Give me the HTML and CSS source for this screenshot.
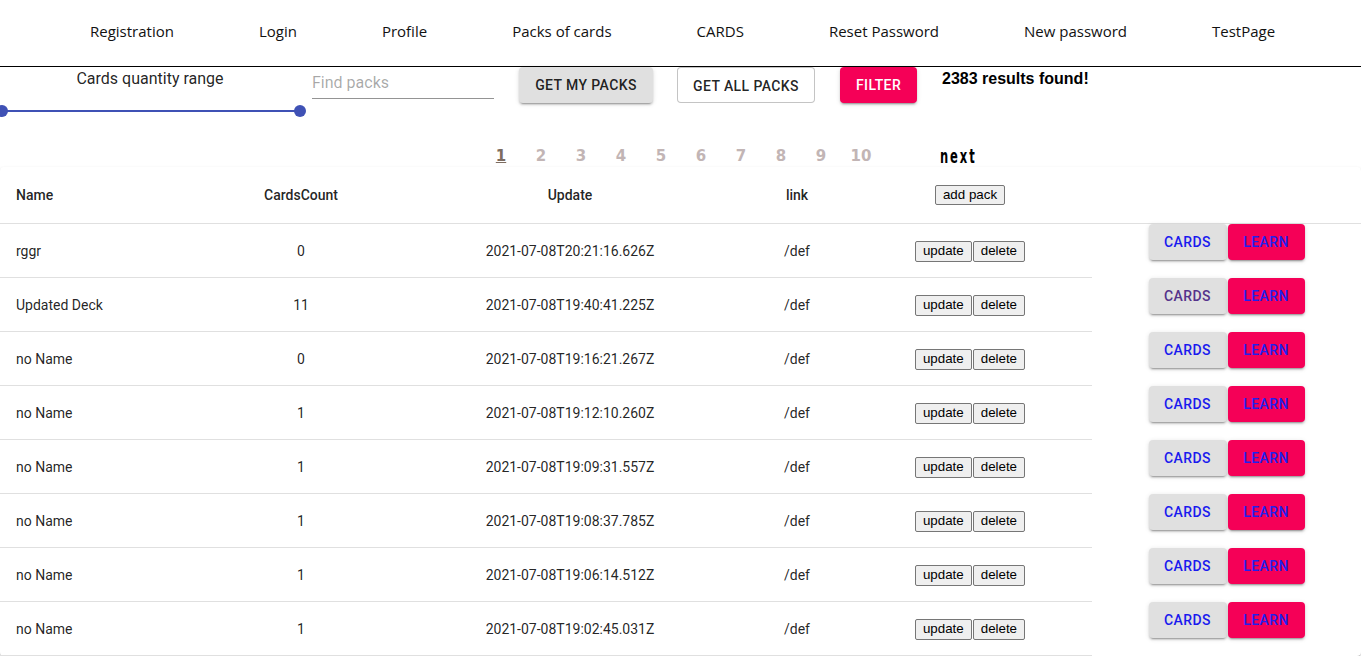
FILE: index.html
```html
<!DOCTYPE html>
<html lang="en">
<head>
<meta charset="utf-8">
<title>Packs of cards</title>
<link rel="stylesheet" href="styles.css">
</head>
<body>
<header class="header">
  <nav class="nav">
    <a class="nav-link">Registration</a>
    <a class="nav-link">Login</a>
    <a class="nav-link">Profile</a>
    <a class="nav-link">Packs of cards</a>
    <a class="nav-link">CARDS</a>
    <a class="nav-link">Reset Password</a>
    <a class="nav-link">New password</a>
    <a class="nav-link">TestPage</a>
  </nav>
</header>

<section class="controls">
  <div class="range">
    <div class="range-label">Cards quantity range</div>
    <div class="slider">
      <span class="slider-track"></span>
      <span class="slider-thumb thumb-left"></span>
      <span class="slider-thumb thumb-right"></span>
    </div>
  </div>
  <input class="search" type="text" placeholder="Find packs">
  <button class="mbtn mbtn-gray w-my">Get my packs</button>
  <button class="mbtn mbtn-outline w-all">Get all packs</button>
  <button class="mbtn mbtn-pink w-filter">Filter</button>
  <div class="results">2383 results found!</div>
</section>

<div class="pagination">
  <span class="page current">1</span>
  <span class="page">2</span>
  <span class="page">3</span>
  <span class="page">4</span>
  <span class="page">5</span>
  <span class="page">6</span>
  <span class="page">7</span>
  <span class="page">8</span>
  <span class="page">9</span>
  <span class="page">10</span>
  <span class="next">next</span>
</div>

<div class="paper">
  <div class="row head">
    <div class="cell left">Name</div>
    <div class="cell">CardsCount</div>
    <div class="cell">Update</div>
    <div class="cell">link</div>
    <div class="cell c5"><button class="nbtn">add pack</button></div>
    <div class="cell"></div>
  </div>

  <div class="row body">
    <div class="cell left">rggr</div>
    <div class="cell">0</div>
    <div class="cell">2021-07-08T20:21:16.626Z</div>
    <div class="cell">/def</div>
    <div class="cell c5"><div class="pair"><button class="nbtn">update</button><button class="nbtn">delete</button></div></div>
    <div class="cell c6"><button class="mbtn mbtn-gray w-cards link">Cards</button><button class="mbtn mbtn-pink w-learn link">Learn</button></div>
  </div>

  <div class="row body">
    <div class="cell left">Updated Deck</div>
    <div class="cell">11</div>
    <div class="cell">2021-07-08T19:40:41.225Z</div>
    <div class="cell">/def</div>
    <div class="cell c5"><div class="pair"><button class="nbtn">update</button><button class="nbtn">delete</button></div></div>
    <div class="cell c6"><button class="mbtn mbtn-gray w-cards link visited">Cards</button><button class="mbtn mbtn-pink w-learn link">Learn</button></div>
  </div>

  <div class="row body">
    <div class="cell left">no Name</div>
    <div class="cell">0</div>
    <div class="cell">2021-07-08T19:16:21.267Z</div>
    <div class="cell">/def</div>
    <div class="cell c5"><div class="pair"><button class="nbtn">update</button><button class="nbtn">delete</button></div></div>
    <div class="cell c6"><button class="mbtn mbtn-gray w-cards link">Cards</button><button class="mbtn mbtn-pink w-learn link">Learn</button></div>
  </div>

  <div class="row body">
    <div class="cell left">no Name</div>
    <div class="cell">1</div>
    <div class="cell">2021-07-08T19:12:10.260Z</div>
    <div class="cell">/def</div>
    <div class="cell c5"><div class="pair"><button class="nbtn">update</button><button class="nbtn">delete</button></div></div>
    <div class="cell c6"><button class="mbtn mbtn-gray w-cards link">Cards</button><button class="mbtn mbtn-pink w-learn link">Learn</button></div>
  </div>

  <div class="row body">
    <div class="cell left">no Name</div>
    <div class="cell">1</div>
    <div class="cell">2021-07-08T19:09:31.557Z</div>
    <div class="cell">/def</div>
    <div class="cell c5"><div class="pair"><button class="nbtn">update</button><button class="nbtn">delete</button></div></div>
    <div class="cell c6"><button class="mbtn mbtn-gray w-cards link">Cards</button><button class="mbtn mbtn-pink w-learn link">Learn</button></div>
  </div>

  <div class="row body">
    <div class="cell left">no Name</div>
    <div class="cell">1</div>
    <div class="cell">2021-07-08T19:08:37.785Z</div>
    <div class="cell">/def</div>
    <div class="cell c5"><div class="pair"><button class="nbtn">update</button><button class="nbtn">delete</button></div></div>
    <div class="cell c6"><button class="mbtn mbtn-gray w-cards link">Cards</button><button class="mbtn mbtn-pink w-learn link">Learn</button></div>
  </div>

  <div class="row body">
    <div class="cell left">no Name</div>
    <div class="cell">1</div>
    <div class="cell">2021-07-08T19:06:14.512Z</div>
    <div class="cell">/def</div>
    <div class="cell c5"><div class="pair"><button class="nbtn">update</button><button class="nbtn">delete</button></div></div>
    <div class="cell c6"><button class="mbtn mbtn-gray w-cards link">Cards</button><button class="mbtn mbtn-pink w-learn link">Learn</button></div>
  </div>

  <div class="row body">
    <div class="cell left">no Name</div>
    <div class="cell">1</div>
    <div class="cell">2021-07-08T19:02:45.031Z</div>
    <div class="cell">/def</div>
    <div class="cell c5"><div class="pair"><button class="nbtn">update</button><button class="nbtn">delete</button></div></div>
    <div class="cell c6"><button class="mbtn mbtn-gray w-cards link">Cards</button><button class="mbtn mbtn-pink w-learn link">Learn</button></div>
  </div>
</div>
</body>
</html>
```

FILE: styles.css
```css
* { box-sizing: border-box; }

html, body {
  margin: 0;
  padding: 0;
  background: #fff;
  font-family: Roboto, "Liberation Sans", sans-serif;
  color: rgba(0, 0, 0, 0.87);
}

/* ---------- header ---------- */
.header {
  height: 67px;
  border-bottom: 1px solid #000;
}

.nav {
  display: flex;
  align-items: center;
  height: 61px;
  padding-left: 90px;
  gap: 85px;
}

.nav-link {
  font-family: "Open Sans", "Noto Sans", sans-serif;
  font-size: 15px;
  color: #111;
  text-decoration: none;
}

/* ---------- controls ---------- */
.controls {
  display: flex;
  align-items: flex-start;
  height: 53px;
}

.range {
  width: 300px;
}

.range-label {
  margin-top: 2px;
  font-size: 16px;
  line-height: 19px;
  text-align: center;
  color: rgba(0, 0, 0, 0.87);
}

.slider {
  position: relative;
  margin: 17px 0 0 2px;
  width: 298px;
  height: 12px;
}

.slider-track {
  position: absolute;
  left: 0;
  right: 0;
  top: 5px;
  height: 2px;
  background: #3f51b5;
}

.slider-thumb {
  position: absolute;
  top: 0;
  width: 12px;
  height: 12px;
  border-radius: 50%;
  background: #3f51b5;
}

.thumb-left { left: -6px; }
.thumb-right { right: -6px; }

.search {
  margin-left: 12px;
  width: 182px;
  height: 32px;
  padding: 6px 0 7px;
  border: 0;
  border-bottom: 1px solid rgba(0, 0, 0, 0.42);
  font-family: Roboto, sans-serif;
  font-size: 16px;
  line-height: 19px;
  outline: none;
  background: transparent;
}

.search::placeholder {
  color: rgba(0, 0, 0, 0.35);
}

/* material buttons */
.mbtn {
  height: 36px;
  padding: 6px 8px;
  border: 0;
  border-radius: 4px;
  font-family: Roboto, sans-serif;
  font-weight: 500;
  font-size: 14px;
  line-height: 24px;
  letter-spacing: 0.4px;
  text-transform: uppercase;
  color: rgba(0, 0, 0, 0.87);
  cursor: pointer;
}

.mbtn-gray {
  background: #e0e0e0;
  box-shadow: 0 3px 1px -2px rgba(0,0,0,0.2), 0 2px 2px 0 rgba(0,0,0,0.14), 0 1px 5px 0 rgba(0,0,0,0.12);
}

.mbtn-pink {
  background: #f50057;
  color: #fff;
  box-shadow: 0 3px 1px -2px rgba(0,0,0,0.2), 0 2px 2px 0 rgba(0,0,0,0.14), 0 1px 5px 0 rgba(0,0,0,0.12);
}

.mbtn-outline {
  background: #fff;
  border: 1px solid rgba(0, 0, 0, 0.23);
}

.w-my { margin-left: 25px; width: 134px; }
.w-all { margin-left: 24px; width: 138px; }
.w-filter { margin-left: 25px; width: 77px; }

.results {
  margin: 3px 0 0 25px;
  font-family: "Liberation Sans", Arial, sans-serif;
  font-weight: bold;
  font-size: 16px;
  line-height: 18px;
  color: #000;
}

/* ---------- pagination ---------- */
.pagination {
  display: flex;
  align-items: center;
  height: 47px;
  padding: 25px 0 1px 481px;
}

.page {
  width: 40px;
  text-align: center;
  font-family: "DejaVu Sans", Verdana, sans-serif;
  font-weight: bold;
  font-size: 15px;
  line-height: 20px;
  color: #c2b5b5;
}

.page.current {
  color: #7c6c60;
  text-decoration: underline;
}

.next {
  display: inline-block;
  margin-left: 59px;
  font-family: "DejaVu Sans Condensed", "DejaVu Sans", sans-serif;
  font-weight: bold;
  font-size: 20px;
  line-height: 20px;
  letter-spacing: 3px;
  color: #000;
  transform: scaleX(0.64);
  transform-origin: left center;
}

/* ---------- table ---------- */
.paper {
  border-radius: 4px;
  background: #fff;
  box-shadow: 0 2px 1px -1px rgba(0,0,0,0.2), 0 1px 1px 0 rgba(0,0,0,0.14), 0 1px 3px 0 rgba(0,0,0,0.12);
}

.row {
  display: grid;
  grid-template-columns: 200px 202px 336px 118px 236px 1fr;
}

.cell {
  display: flex;
  align-items: center;
  justify-content: center;
  font-size: 14px;
  line-height: 20px;
  border-bottom: 1px solid #e0e0e0;
}

.cell.left {
  justify-content: flex-start;
  padding-left: 16px;
}

.cell.c5 {
  padding-right: 8px;
}

.head .cell {
  height: 57px;
  font-weight: 500;
  line-height: 24px;
}

.body .cell {
  height: 54px;
}

.body .cell.c6 {
  border-bottom: 0;
  align-items: flex-start;
  gap: 1px;
}

.nbtn {
  height: 20px;
  padding: 0 7px;
  border: 1px solid #767676;
  border-radius: 2px;
  background: #efefef;
  font-family: "Liberation Sans", Arial, sans-serif;
  font-size: 13.33px;
  line-height: 16px;
  color: #000;
}

.pair {
  display: flex;
  gap: 1px;
  padding-top: 1px;
}

.pair .nbtn { height: 21px; }

.w-cards { width: 78px; }
.w-learn { width: 77px; }

.link { color: #1a1aee; }
.link.visited { color: #55338b; }
.mbtn-pink.link { color: #2020ee; }
```
